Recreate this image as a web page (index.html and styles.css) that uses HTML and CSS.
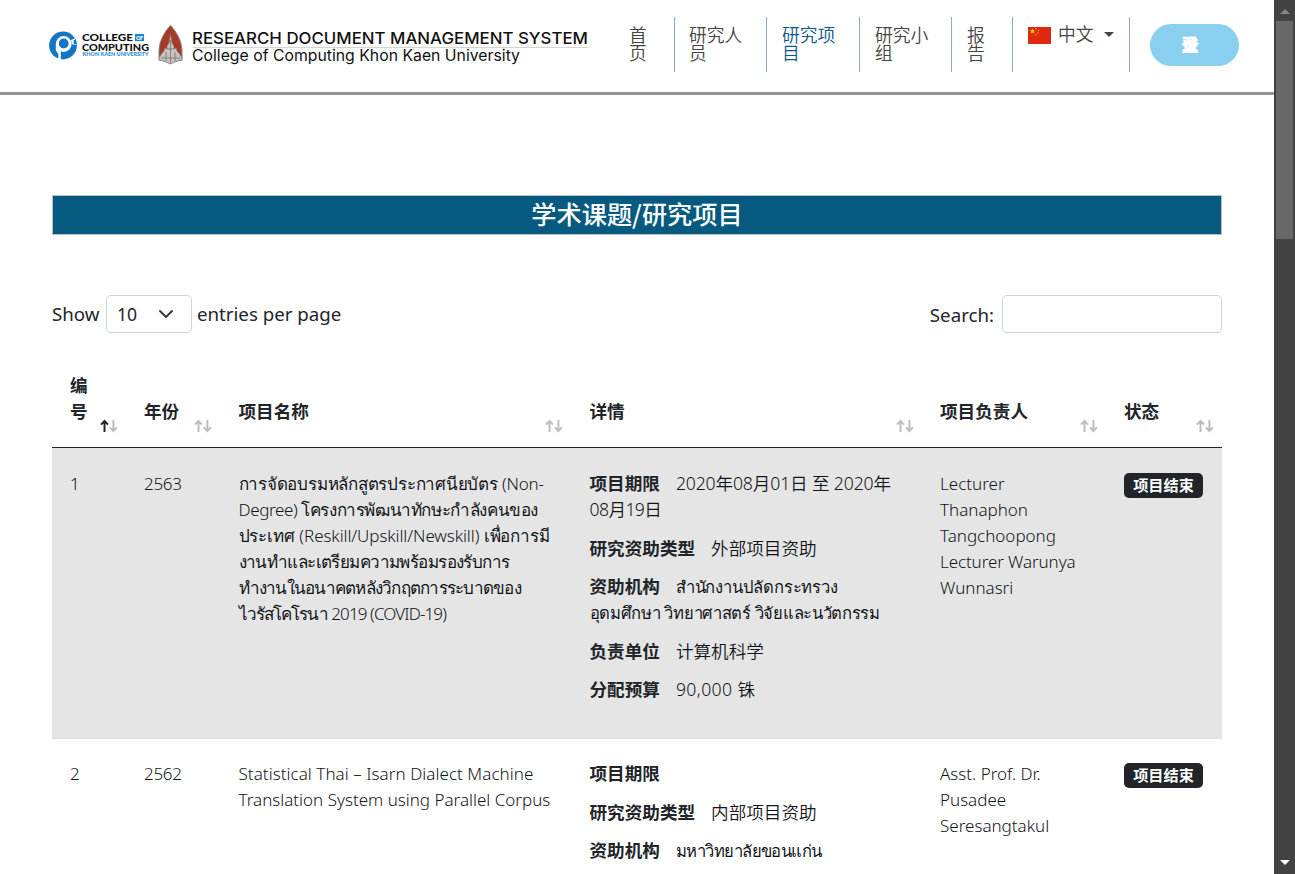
FILE: index.html
```html
<!DOCTYPE html>
<html lang="zh">
<head>
<meta charset="utf-8">
<title>研究项目</title>
<link rel="stylesheet" href="styles.css">
</head>
<body>
<svg width="0" height="0" class="defs">
  <symbol id="sort" viewBox="0 0 18 14"><path class="up" d="M4.5 13V2.2M1 5.6L4.5 2l3.5 3.6"/><path class="down" d="M13.4 1v10.8M9.9 8.4l3.5 3.6 3.5-3.6"/></symbol>
</svg>
<div class="window">
<div class="page">
  <header class="navbar">
    <svg class="logo" width="540" height="42" viewBox="0 0 540 42">
      <circle cx="14" cy="21.500" r="13.900" fill="#1376c4"/>
      <circle cx="14.700" cy="20" r="7.900" fill="#fff"/>
      <path d="M6.800 20v6.500l2.500 3.500v6h2.500V25z" fill="#fff"/>
      <path d="M22 16l7-3v7.500h-6z" fill="#fff"/>
      <path d="M24.500 16.500l2.400-1.400 1 5h-3z" fill="#1376c4"/>
      <circle cx="14.700" cy="19.500" r="4.900" fill="#1376c4"/>
      <g class="college">
        <text x="33" y="17.200" font-size="10" textLength="51" lengthAdjust="spacingAndGlyphs">COLLEGE</text>
        <rect x="86" y="10" width="9" height="7" fill="#1c83d2"/>
        <text x="87" y="15.700" font-size="5.500" class="white" textLength="7">OF</text>
        <text x="33" y="26.600" font-size="10" textLength="67" lengthAdjust="spacingAndGlyphs">COMPUTING</text>
        <text x="33.500" y="32.200" font-size="5.500" class="blue" textLength="66" lengthAdjust="spacingAndGlyphs">KHON KAEN UNIVERSITY</text>
      </g>
      <path d="M121.500 1.500C117 6 110 16 110 27v9l5 1 6.500 2.500 6.500-2.500 5-1v-9C133 16 126 6 121.500 1.500z" fill="#a63a28" stroke="#8c8582"/>
      <path d="M121.500 10l-1.500 9-2 3v3l-2-1-1.500 4-1.500 1-3 5v2l5 1 6.500 3 6.500-3 5-1v-2l-3-5-1.500-1-1.500-4-2 1v-3l-2-3z" fill="#c9c4c1" stroke="#777" stroke-width=".6"/>
      <path d="M121.500 16v23M117 28v9M126 28v9M112 34h19M118 25h7" fill="none" stroke="#77706d" stroke-width=".8"/>
      <g class="title">
        <text x="143" y="19.800" font-size="16" textLength="396" lengthAdjust="spacingAndGlyphs" class="strong">RESEARCH DOCUMENT MANAGEMENT SYSTEM</text>
        <path d="M144 23.500h395" stroke="#d5d5d5"/>
        <text x="143" y="37" font-size="15.500" textLength="328" lengthAdjust="spacingAndGlyphs">College of Computing Khon Kaen University</text>
      </g>
    </svg>
    <nav class="menu">
      <a class="item home">首页</a>
      <a class="item people">研究人员</a>
      <a class="item project active">研究项目</a>
      <a class="item group">研究小组</a>
      <a class="item report">报告</a>
      <a class="item lang">
        <svg width="23" height="17" viewBox="0 0 23 17"><path fill="#de2910" d="M0 0h23v17H0z"/><path fill="#ffde00" d="M4.500 1.500l.7 1.800h2L5.700 4.600l.6 2-1.800-1.200-1.800 1.200.6-2L1.700 3.300h2zM7.500 1h1v1h-1zM10 3h1v1h-1zM9.500 5.500h1v1h-1zM7.500 7.500h1v1h-1z"/></svg>
        <span>中文</span><i class="caret"></i>
      </a>
    </nav>
    <button class="login"><span>登</span><span>录</span></button>
  </header>

  <main class="content">
    <h1 class="heading">学术课题/研究项目</h1>
    <div class="controls">
      <label class="length"><span class="show">Show</span>
        <span class="select"><span>10</span><svg width="16" height="16" viewBox="0 0 16 16"><path d="M2 5l6 6 6-6" fill="none" stroke="#343a40" stroke-width="2" stroke-linecap="round" stroke-linejoin="round"/></svg></span>
        <span class="entries">entries per page</span></label>
      <label class="search"><span>Search:</span><input type="text"></label>
    </div>
    <div class="table">
      <div class="row head">
        <div class="cell num sorted">编号<svg class="sort" viewBox="0 0 18 14"><path class="up" d="M4.500 13V2.200M1 5.600L4.500 2l3.500 3.600"/><path d="M13.400 1v10.800M9.900 8.400l3.500 3.600 3.500-3.600"/></svg></div>
        <div class="cell">年份<svg class="sort"><use href="#sort"/></svg></div>
        <div class="cell">项目名称<svg class="sort"><use href="#sort"/></svg></div>
        <div class="cell">详情<svg class="sort"><use href="#sort"/></svg></div>
        <div class="cell">项目负责人<svg class="sort"><use href="#sort"/></svg></div>
        <div class="cell">状态<svg class="sort"><use href="#sort"/></svg></div>
      </div>
      <div class="row odd">
        <div class="cell">1</div>
        <div class="cell year">2563</div>
        <div class="cell lines"><span class="tight-1">การจัดอบรมหลักสูตรประกาศนียบัตร (Non-</span><span class="tight-2">Degree) โครงการพัฒนาทักษะกำลังคนของ</span><span class="tight-0">ประเทศ (Reskill/Upskill/Newskill) เพื่อการมี</span><span class="tight-3">งานทำและเตรียมความพร้อมรองรับการ</span><span class="tight-4">ทำงานในอนาคตหลังวิกฤตการระบาดของ</span><span class="tight-5">ไวรัสโคโรนา 2019 (COVID-19)</span></div>
        <div class="cell details">
          <p><b>项目期限</b><span class="date">2020年08月01日 至 2020年</span><br><span class="date short">08月19日</span></p>
          <p><b>研究资助类型</b><span>外部项目资助</span></p>
          <p><b>资助机构</b><span class="thai agency">สำนักงานปลัดกระทรวง</span><br><span class="thai ministry">อุดมศึกษา วิทยาศาสตร์ วิจัยและนวัตกรรม</span></p>
          <p><b>负责单位</b><span>计算机科学</span></p>
          <p><b>分配预算</b><span class="budget">90,000 铢</span></p>
        </div>
        <div class="cell lines"><span>Lecturer</span><span>Thanaphon</span><span>Tangchoopong</span><span class="warunya">Lecturer Warunya</span><span>Wunnasri</span></div>
        <div class="cell"><span class="badge">项目结束</span></div>
      </div>
      <div class="row even">
        <div class="cell">2</div>
        <div class="cell year">2562</div>
        <div class="cell lines"><span class="wide">Statistical Thai – Isarn Dialect Machine</span><span>Translation System using Parallel Corpus</span></div>
        <div class="cell details">
          <p><b>项目期限</b></p>
          <p><b>研究资助类型</b><span>内部项目资助</span></p>
          <p><b>资助机构</b><span class="thai university">มหาวิทยาลัยขอนแก่น</span></p>
        </div>
        <div class="cell lines"><span>Asst. Prof. Dr.</span><span>Pusadee</span><span>Seresangtakul</span></div>
        <div class="cell"><span class="badge">项目结束</span></div>
      </div>
    </div>
  </main>
</div>
<aside class="scrollbar"><i class="arrow up"></i><i class="thumb"></i><i class="arrow down"></i></aside>
</div>
</body>
</html>
```
FILE: styles.css
```css
* { box-sizing: border-box; }
body { margin: 0; overflow: hidden; background: #fff; color: #212529; font-family: "Noto Sans", "Noto Sans CJK SC", sans-serif; }
.defs { position: absolute; }
.window { display: flex; height: 874px; overflow: hidden; }
.page { width: 1274px; flex: none; }
.navbar { display: flex; height: 95px; border-bottom: 3px solid #949494; padding-left: 49px; }
.logo { margin-top: 24px; flex: none; }
.logo text { font-family: Lato, sans-serif; fill: #111; }
.logo .title text { font-family: Inter, sans-serif; }
.logo .title .strong { font-weight: 500; }
.logo .college text { font-weight: 900; }
.logo .college .white { fill: #fff; }
.logo .college .blue { fill: #2388d3; }
.menu { display: flex; margin: 17px 0 0 25px; height: 55px; }
.item { border-right: 1px solid #92a9bd; padding: 8px 14px 0; font: 350 17.8px/18px "Noto Sans CJK SC", sans-serif; color: #444; }
.home { width: 61px; padding-left: 15px; padding-right: 26px; }
.people { width: 92px; }
.project { width: 93px; padding-left: 15px; }
.active { color: #0a588c; }
.group { width: 92px; padding-left: 15px; }
.report { width: 61px; padding-left: 15px; padding-right: 26px; }
.lang { width: 117px; display: flex; padding-left: 15px; }
.lang svg { margin: 2px 7px 0 0; }
.lang span { line-height: 17px; }
.caret { border: 5px solid transparent; border-top-color: #444; border-bottom: 0; margin: 7px 0 0 10px; height: 5px; }
.login { width: 89px; height: 42px; margin: 24px 0 0 20px; border: 0; border-radius: 21px; background: #89cff0; color: #fff; display: grid; grid-template-columns: 18px; align-content: center; justify-content: start; padding: 0 0 2px 31px; font: 900 17.6px/20px "Noto Sans CJK SC", sans-serif; }
.login span { grid-area: 1 / 1; }
.content { padding: 100px 52px 0; }
.heading { margin: 0; height: 40px; border: 1px solid #b5bfc4; background: #065a7f; color: #fff; text-align: center; font: 500 25.2px/35px "Noto Sans CJK SC", sans-serif; }
.controls { display: flex; justify-content: space-between; margin-top: 60px; height: 38px; font-size: 18.7px; line-height: 38px; }
.length, .search { display: flex; }
.show { width: 54px; }
.select { width: 86px; border: 1px solid #ced4da; border-radius: 5px; display: flex; justify-content: space-between; align-items: center; padding: 0 17px 0 10px; font-size: 17.6px; margin-right: 5px; }
.search { gap: 8px; line-height: 40px; }
.search input { width: 220px; height: 38px; border: 1px solid #ced4da; border-radius: 5px; background: #fff; }
.table { margin-top: 22px; font-size: 17px; line-height: 26px; }
.row { display: grid; grid-template-columns: 74px 94.5px 351px 350.5px 184px 116px; border-bottom: 1px solid #dee2e6; }
.cell { padding: 23px 18px 0; font-weight: 350; white-space: nowrap; color: #111519; }
.year { letter-spacing: -.3px; }
.head { height: 93px; border-bottom-color: #212529; align-items: center; }
.head .cell { position: relative; height: 52px; display: flex; align-items: flex-end; margin-top: -6px; padding: 0 18px; color: #212529; font: 700 17.6px/26px "Noto Sans CJK SC", sans-serif; }
.head .num { padding-right: 38px; white-space: normal; }
.sort { position: absolute; right: 8.5px; bottom: -9px; width: 18px; height: 14px; fill: none; stroke-width: 2; stroke: #bdbdbd; }
.sorted .up { stroke: #212529; }
.odd { background: #e5e5e5; height: 291px; }
.even .cell { padding-top: 22px; }
.lines span { display: block; width: max-content; }
.tight-0 { letter-spacing: -.08px; }
.tight-1 { letter-spacing: -.22px; }
.tight-2 { letter-spacing: -.4px; }
.tight-3 { letter-spacing: -.57px; }
.tight-4 { letter-spacing: -.75px; }
.tight-5 { letter-spacing: -.88px; }
.warunya { letter-spacing: -.1px; }
.wide { letter-spacing: .05px; }
.details p { margin: 0 0 12.5px; font-size: 17.6px; line-height: 26px; }
.details b, .details span { display: inline-block; height: 26px; vertical-align: top; line-height: 25px; }
.details b { margin-right: 16px; color: #212529; font: 700 17.6px/24px "Noto Sans CJK SC", sans-serif; }
.details .date { letter-spacing: -.14px; }
.details .short { letter-spacing: -.6px; }
.details .budget { letter-spacing: .4px; }
.details .thai { font-size: 16.6px; line-height: 26px; }
.agency { letter-spacing: -.2px; }
.ministry { letter-spacing: -.3px; }
.university { letter-spacing: -.54px; }
.badge { display: block; width: 79px; height: 25px; margin-top: 2px; border-radius: 5px; background: #212529; color: #fff; text-align: center; font: 700 15.2px/23px "Noto Sans CJK SC", sans-serif; }
.scrollbar { width: 21px; background: #424242; display: flex; flex-direction: column; align-items: center; }
.thumb { width: 17px; height: 218px; background: #686868; margin-top: 7px; }
.arrow { border: 5px solid transparent; width: 10px; height: 5px; }
.arrow.up { border-top: 0; border-bottom-color: #868686; margin-top: 9px; }
.arrow.down { border-bottom: 0; border-top-color: #fff; margin: auto 0 9px; }
```
